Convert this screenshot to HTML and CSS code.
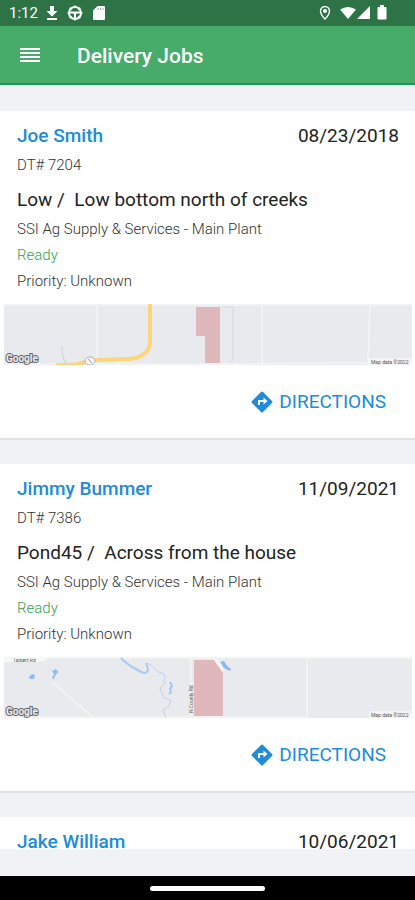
FILE: index.html
```html
<!DOCTYPE html>
<html lang="en">
<head>
<meta charset="utf-8">
<meta name="viewport" content="width=device-width, initial-scale=1">
<title>Delivery Jobs</title>
<link rel="stylesheet" href="styles.css">
</head>
<body>
<div class="status">
  <span class="clock">1:12</span>
  <svg class="download" width="12" height="16" viewBox="0 0 12 16" fill="#fff"><path d="M4 1h4v5h3.500L6 11.500.500 6H4zM1 13h10v2H1z"/></svg>
  <svg class="wheel" width="16" height="16" viewBox="0 0 16 16" fill="none" stroke="#fff"><circle cx="8" cy="8" r="6" stroke-width="2"/><path d="M3 7.500h10M8 8v5" stroke-width="2"/><path d="M6 8h4l-2 3z" fill="#fff" stroke="none"/><path d="M8 .500v2M8 13.500v2M.500 8h2M13.500 8h2M2.700 2.700l2 2M13.300 2.700l-2 2M2.700 13.300l2-2M13.300 13.300l-2-2" stroke-width="1.500"/></svg>
  <svg class="card-icon" width="12" height="16" viewBox="0 0 12 16"><path d="M4.500 1H11q1 0 1 1v12q0 1-1 1H1q-1 0-1-1V5.500z" fill="#fff"/><path d="M5 3v2M7.500 3v2M10 3v2" stroke="#9aaba0"/></svg>
  <span class="spacer"></span>
  <svg class="pin" width="12" height="16" viewBox="0 0 12 16"><path d="M6 1.500a4.500 4.500 0 0 0-4.500 4.500C1.500 9.500 6 14 6 14s4.500-4.500 4.500-8A4.500 4.500 0 0 0 6 1.500z" fill="none" stroke="#fff" stroke-width="1.400"/><circle cx="6" cy="6" r="2" fill="#fff"/></svg>
  <svg class="wifi" width="16" height="16" viewBox="0 0 16 16"><path d="M0 4.500Q8-.500 16 4.500L8 14z" fill="#fff"/></svg>
  <svg class="signal" width="13" height="16" viewBox="0 0 13 16"><path d="M13 1v13H0z" fill="#fff"/></svg>
  <svg class="battery" width="10" height="16" viewBox="0 0 10 16"><path d="M3 0h4v2h1.500q1 0 1 1v10.500q0 1-1 1h-7q-1 0-1-1V3q0-1 1-1H3z" fill="#fff"/></svg>
</div>

<header class="appbar">
  <button class="menu" type="button" aria-label="Menu">
    <svg width="20" height="16" viewBox="0 0 20 16"><path d="M0 2h20M0 6h20M0 10h20M0 14h20" stroke="#fff" stroke-width="2"/></svg>
  </button>
  <h1>Delivery Jobs</h1>
</header>

<main class="jobs">
  <article class="job">
    <div class="details">
      <div class="heading"><h2>Joe Smith</h2><time datetime="2018-08-23">08/23/2018</time></div>
      <p>DT# 7204</p>
      <h3>Low /&nbsp; Low bottom north of creeks</h3>
      <p>SSI Ag Supply &amp; Services - Main Plant</p>
      <p class="ready">Ready</p>
      <p>Priority: Unknown</p>
    </div>
    <svg class="map" viewBox="0 0 408 61" role="img" aria-label="Map of job site">
      <rect width="408" height="61" fill="#e8eaed"/>
      <g fill="none" stroke="#f3f5f6">
        <path d="M0 1h408M0 60h230l90-1h88" stroke-width="1.500"/>
        <path d="M93 0v55M115 53v8M258 0v61M366 0l-2 61" stroke-width="1.500"/>
      </g>
      <path d="M57 42l2 3-2 2 3 5-1 3 3 2-2 4" fill="none" stroke="#c2d3f1"/>
      <path d="M52 61h15c10 0 12-4 24-5l32-1c15 0 23-8 23-17V0" fill="none" stroke="#fbd57c" stroke-width="4"/>
      <ellipse cx="86" cy="57" rx="5" ry="4" fill="#f4f4f4" stroke="#b5b5b5"/>
      <path d="M84 55l4 4" stroke="#999"/>
      <path d="M192 3h24v56h-15V32h-9z" fill="#deb8bb"/>
      <path d="M217 3h12v52l-2 3" fill="none" stroke="#cbdaf2"/>
      <text class="google" x="2" y="58">Google</text>
      <rect x="365" y="54" width="43" height="7" fill="#f3f4f5"/>
      <text class="credit" x="367" y="60">Map data ©2022</text>
    </svg>
    <div class="actions">
      <button class="directions" type="button"><svg width="22" height="22" viewBox="0 0 22 22"><path d="M10 1q1-1 2 0l9 9q1 1 0 2l-9 9q-1 1-2 0l-9-9q-1-1 0-2z" fill="#218bd6"/><path d="M8 14v-4h5" fill="none" stroke="#fff" stroke-width="2"/><path d="M12.500 6.500L16.500 10l-4 3.500z" fill="#fff"/></svg>DIRECTIONS</button>
    </div>
  </article>

  <article class="job">
    <div class="details">
      <div class="heading"><h2>Jimmy Bummer</h2><time datetime="2021-11-09">11/09/2021</time></div>
      <p>DT# 7386</p>
      <h3>Pond45 /&nbsp; Across from the house</h3>
      <p>SSI Ag Supply &amp; Services - Main Plant</p>
      <p class="ready">Ready</p>
      <p>Priority: Unknown</p>
    </div>
    <svg class="map" viewBox="0 0 408 61" role="img" aria-label="Map of job site">
      <rect width="408" height="61" fill="#e8eaed"/>
      <path d="M0 0h46q-5 5-16 5H0z" fill="#f7f8f8"/>
      <text class="road" x="9" y="5">Talbert Rd</text>
      <path d="M48 25l42 36M0 1h408M187 0v61M303 0v61M0 60h303" fill="none" stroke="#f3f5f6" stroke-width="1.500"/>
      <path d="M25 20l3-3 3 1-1 4h-4zM48 14l4-2 2 3-3 4-1 3-2-1 2-4z" fill="#91bbf3"/>
      <path d="M117 1c7 8 14 10 20 14 5 2 7 0 7-3l-2-6" fill="none" stroke="#aac8f3" stroke-width="2"/>
      <path d="M142 6c9 2 10 10 16 10 5 1 1 7 3 10l-5 5 4 10 7 2-2 6-6 4 3 8" fill="none" stroke="#bfd0ee"/>
      <path d="M166 25l2 4-2 3 1 3-2 2" fill="none" stroke="#a9c6f2" stroke-width="2"/>
      <path d="M190 3h20l9 13v43h-29z" fill="#deb8bb"/>
      <path d="M210 3l9 12V8l-6-6z" fill="#f3f5f6"/>
      <path d="M216 5l4-1 3 5 4 3-1 2-6-3z" fill="#8bb7f4"/>
      <text class="road" transform="translate(189 56) rotate(-90)">N County Rd</text>
      <text class="google" x="2" y="58">Google</text>
      <rect x="365" y="54" width="43" height="7" fill="#f3f4f5"/>
      <text class="credit" x="367" y="60">Map data ©2022</text>
    </svg>
    <div class="actions">
      <button class="directions" type="button"><svg width="22" height="22" viewBox="0 0 22 22"><path d="M10 1q1-1 2 0l9 9q1 1 0 2l-9 9q-1 1-2 0l-9-9q-1-1 0-2z" fill="#218bd6"/><path d="M8 14v-4h5" fill="none" stroke="#fff" stroke-width="2"/><path d="M12.500 6.500L16.500 10l-4 3.500z" fill="#fff"/></svg>DIRECTIONS</button>
    </div>
  </article>

  <article class="job">
    <div class="details">
      <div class="heading"><h2>Jake William</h2><time datetime="2021-10-06">10/06/2021</time></div>
    </div>
  </article>
</main>

<footer class="navbar"><span class="handle"></span></footer>
</body>
</html>
```
FILE: styles.css
```css
* { box-sizing: border-box; }

body {
  margin: 0;
  height: 100vh;
  display: flex;
  flex-direction: column;
  overflow: hidden;
  background: #f0f2f3;
  color: #222;
  font-family: Roboto, "Liberation Sans", sans-serif;
}

h1, h2, h3, p { margin: 0; }
button { border: 0; padding: 0; background: none; font: inherit; }
svg { display: block; flex-shrink: 0; }

.status {
  flex: none;
  display: flex;
  align-items: center;
  height: 26px;
  padding: 0 28px 0 9px;
  background: #2d7346;
  color: #fff;
}
.clock { font-size: 15px; line-height: 26px; }
.download { margin-left: 8px; }
.wheel { margin-left: 9px; }
.card-icon { margin-left: 10px; }
.spacer { flex: 1; }
.wifi { margin-left: 9px; }
.signal { margin-left: 1px; }
.battery { margin-left: 7px; }

.appbar {
  flex: none;
  display: flex;
  align-items: center;
  gap: 37px;
  height: 59px;
  padding-left: 20px;
  background: #47ab69;
  border-bottom: 2px solid #15985a;
  color: #fff;
}
.appbar h1 { padding-top: 3px; font-size: 21px; line-height: 28px; font-weight: 500; }

.jobs {
  flex: 1;
  min-height: 0;
  overflow: hidden;
  margin-bottom: 27px;
  padding-top: 26px;
}
.job {
  margin-bottom: 24px;
  background: #fff;
  border-bottom: 2px solid #dfe1e2;
}
.details { padding: 9px 16px 10px 17px; }
.heading {
  display: flex;
  justify-content: space-between;
  line-height: 32px;
}
.heading h2 { font-size: 19px; font-weight: 500; color: #218bd6; }
.heading time { font-size: 19px; }
.details h3 { margin-top: 6px; font-size: 19px; line-height: 32px; font-weight: 400; }
.details p { font-size: 15px; line-height: 26px; font-weight: 300; color: #333; }
.details .ready { color: #2f9f55; }

.map { width: calc(100% - 7px); margin-left: 4px; }
.google {
  font: 700 10px Roboto, sans-serif;
  fill: #eee;
  stroke: #666;
  stroke-width: 2px;
  paint-order: stroke;
}
.credit { font: 5px Roboto, sans-serif; fill: #555; }
.road { font: 5px Roboto, sans-serif; fill: #555; }

.actions {
  display: flex;
  justify-content: flex-end;
  align-items: center;
  height: 73px;
  padding-right: 29px;
}
.directions {
  display: flex;
  align-items: center;
  gap: 6px;
  font-size: 19px;
  line-height: 24px;
  color: #218bd6;
}

.navbar {
  flex: none;
  display: flex;
  align-items: center;
  justify-content: center;
  height: 24px;
  background: #000;
}
.handle { width: 115px; height: 5px; border-radius: 3px; background: #fff; }
```
